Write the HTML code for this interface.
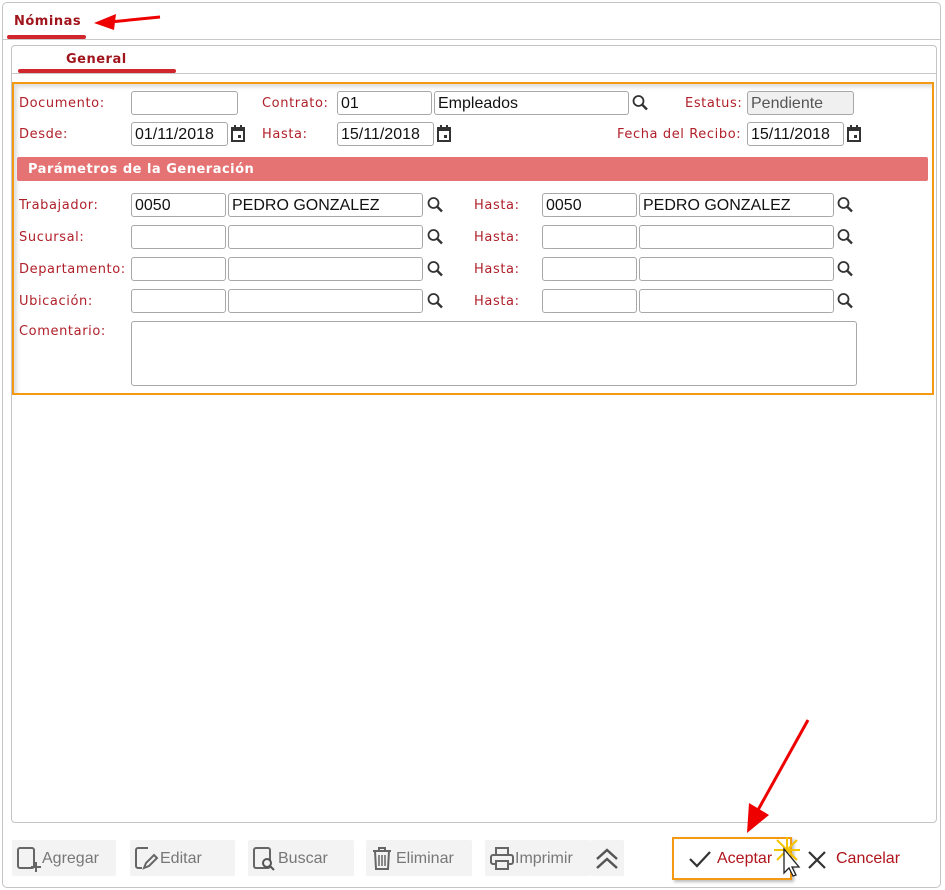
<!DOCTYPE html>
<html><head><meta charset="utf-8"><style>
*{box-sizing:border-box;margin:0;padding:0}
body{width:945px;height:890px;background:#fff;position:relative;overflow:hidden;font-family:"DejaVu Sans",Verdana,sans-serif}
.a{position:absolute}
.lbl{position:absolute;font-size:13px;color:#b0202a;letter-spacing:0.6px;line-height:26px;height:24px;white-space:nowrap}
.in{position:absolute;height:24px;border:1px solid #a8a8a8;border-radius:3px;background:#fff;font-family:"Liberation Sans",Arial,sans-serif;font-size:16px;line-height:24px;padding-left:3px;color:#111;white-space:nowrap;overflow:hidden}
.btn{position:absolute;top:840px;height:36px;background:#f3f3f3;border-radius:2px;font-family:"Liberation Sans",Arial,sans-serif;font-size:16px;color:#777;line-height:38px}
.btn svg{position:absolute;left:4px;top:6px}
.btn span{position:absolute;left:30px}
</style></head><body>
<div class="a" style="left:2px;top:2px;width:939px;height:886px;border:1px solid #c4c4c4;border-radius:5px"></div>
<div class="a" style="left:3px;top:39px;width:937px;height:1px;background:#c8c8c8"></div>
<div class="a" style="left:14px;top:14px;font-size:13px;font-weight:bold;color:#a0141c;letter-spacing:0.5px">Nóminas</div>
<div class="a" style="left:7px;top:35px;width:79px;height:4px;background:#d1262e;border-radius:2px"></div>
<svg class="a" style="left:90px;top:10px" width="75" height="25"><path d="M70 7 L20 12" stroke="#e00" stroke-width="3" fill="none"/><polygon points="4,13 26,4 24,20" fill="#e00"/></svg>

<div class="a" style="left:11px;top:45px;width:926px;height:778px;border:1px solid #c4c4c4;border-radius:4px"></div>
<div class="a" style="left:12px;top:73px;width:924px;height:1px;background:#c8c8c8"></div>
<div class="a" style="left:66px;top:52px;font-size:13px;font-weight:bold;color:#a0141c;letter-spacing:0.5px">General</div>
<div class="a" style="left:18px;top:69px;width:158px;height:4px;background:#d1262e;border-radius:2px"></div>

<div class="a" style="left:12px;top:82px;width:922px;height:313px;border:2px solid #f39a12;box-shadow:inset 3px 3px 4px #ddd"></div>

<div class="lbl" style="left:19px;top:91px">Documento:</div>
<div class="in" style="left:131px;top:91px;width:107px"></div>
<div class="lbl" style="left:262px;top:91px">Contrato:</div>
<div class="in" style="left:337px;top:91px;width:95px">01</div>
<div class="in" style="left:434px;top:91px;width:195px">Empleados</div>
<div class="lbl" style="left:685px;top:91px">Estatus:</div>
<div class="in" style="left:747px;top:91px;width:107px;background:#f0f0f0;color:#555">Pendiente</div>

<div class="lbl" style="left:19px;top:122px">Desde:</div>
<div class="in" style="left:131px;top:122px;width:97px">01/11/2018</div>
<div class="lbl" style="left:262px;top:122px">Hasta:</div>
<div class="in" style="left:337px;top:122px;width:97px">15/11/2018</div>
<div class="lbl" style="left:617px;top:122px">Fecha del Recibo:</div>
<div class="in" style="left:747px;top:122px;width:97px">15/11/2018</div>
<svg class="a" style="left:0;top:0" width="945" height="150">
<g id="c"><rect x="232" y="128" width="12" height="13" fill="none" stroke="#333" stroke-width="2"/><rect x="232" y="128" width="12" height="3" fill="#333"/><rect x="234" y="125" width="2" height="3" fill="#333"/><rect x="240" y="125" width="2" height="3" fill="#333"/><rect x="238" y="135" width="3" height="3" fill="#333"/></g>
<use href="#c" x="206"/><use href="#c" x="616"/>
</svg>

<div class="a" style="left:17px;top:157px;width:911px;height:24px;background:#e57373;border-radius:2px;color:#fff;font-size:13px;font-weight:bold;line-height:26px;padding-left:11px;letter-spacing:0.5px">Parámetros de la Generación</div>

<div class="lbl" style="left:19px;top:193px">Trabajador:</div>
<div class="in" style="left:131px;top:193px;width:95px">0050</div>
<div class="in" style="left:228px;top:193px;width:195px">PEDRO GONZALEZ</div>
<div class="lbl" style="left:474px;top:193px">Hasta:</div>
<div class="in" style="left:542px;top:193px;width:95px">0050</div>
<div class="in" style="left:639px;top:193px;width:195px">PEDRO GONZALEZ</div>

<div class="lbl" style="left:19px;top:225px">Sucursal:</div>
<div class="in" style="left:131px;top:225px;width:95px"></div>
<div class="in" style="left:228px;top:225px;width:195px"></div>
<div class="lbl" style="left:474px;top:225px">Hasta:</div>
<div class="in" style="left:542px;top:225px;width:95px"></div>
<div class="in" style="left:639px;top:225px;width:195px"></div>

<div class="lbl" style="left:19px;top:257px">Departamento:</div>
<div class="in" style="left:131px;top:257px;width:95px"></div>
<div class="in" style="left:228px;top:257px;width:195px"></div>
<div class="lbl" style="left:474px;top:257px">Hasta:</div>
<div class="in" style="left:542px;top:257px;width:95px"></div>
<div class="in" style="left:639px;top:257px;width:195px"></div>

<div class="lbl" style="left:19px;top:289px">Ubicación:</div>
<div class="in" style="left:131px;top:289px;width:95px"></div>
<div class="in" style="left:228px;top:289px;width:195px"></div>
<div class="lbl" style="left:474px;top:289px">Hasta:</div>
<div class="in" style="left:542px;top:289px;width:95px"></div>
<div class="in" style="left:639px;top:289px;width:195px"></div>

<svg class="a" style="left:0;top:0" width="945" height="320">
<g stroke="#333" fill="none">
<g id="s"><circle cx="433.5" cy="203" r="5" stroke-width="1.8"/><path d="M437 206.5L442 211.5" stroke-width="2.4"/></g>
<use href="#s" y="32"/><use href="#s" y="64"/><use href="#s" y="96"/>
<use href="#s" x="410"/><use href="#s" x="410" y="32"/><use href="#s" x="410" y="64"/><use href="#s" x="410" y="96"/>
<use href="#s" x="205" y="-102"/>
</g></svg>

<div class="lbl" style="left:19px;top:319px">Comentario:</div>
<div class="in" style="left:131px;top:321px;width:726px;height:65px"></div>

<div class="btn" style="left:12px;width:104px"><svg width="26" height="26"><rect x="2" y="2" width="16" height="20" rx="2" fill="none" stroke="#666" stroke-width="2"/><path d="M20 16v10M15 21h10" stroke="#666" stroke-width="2"/></svg><span>Agregar</span></div>
<div class="btn" style="left:130px;width:105px"><svg width="26" height="26"><path d="M14 2H4a2 2 0 0 0-2 2v16a2 2 0 0 0 2 2h4" fill="none" stroke="#666" stroke-width="2"/><path d="M10 22l2-5 8-8 3 3-8 8z" fill="none" stroke="#666" stroke-width="2"/></svg><span>Editar</span></div>
<div class="btn" style="left:248px;width:106px"><svg width="26" height="26"><rect x="2" y="2" width="16" height="20" rx="2" fill="none" stroke="#666" stroke-width="2"/><circle cx="15" cy="17" r="4" fill="#f3f3f3" stroke="#555" stroke-width="2"/><path d="M18 20l4 4" stroke="#555" stroke-width="2"/></svg><span>Buscar</span></div>
<div class="btn" style="left:366px;width:106px"><svg width="26" height="26"><path d="M3 5h18M9 5V2h6v3M5 5l1 18h12l1-18" fill="none" stroke="#666" stroke-width="2"/><path d="M9 9v11M12 9v11M15 9v11" stroke="#666" stroke-width="1.5"/></svg><span>Eliminar</span></div>
<div class="btn" style="left:485px;width:105px"><svg width="26" height="26"><rect x="7" y="2" width="12" height="7" fill="none" stroke="#666" stroke-width="2"/><rect x="2" y="9" width="22" height="9" rx="2" fill="none" stroke="#666" stroke-width="2"/><rect x="7" y="15" width="12" height="8" fill="#f3f3f3" stroke="#666" stroke-width="2"/></svg><span>Imprimir</span></div>
<div class="btn" style="left:590px;width:34px"><svg width="26" height="26" style="left:4px"><path d="M3 13l10-9 10 9M3 22l10-9 10 9" fill="none" stroke="#555" stroke-width="2.5"/></svg></div>

<div class="a" style="left:672px;top:837px;width:120px;height:43px;border:2px solid #f39a12;box-shadow:2px 2px 3px #bbb"></div>
<svg class="a" style="left:688px;top:849px" width="24" height="20"><path d="M2 10l7 7L22 3" fill="none" stroke="#333" stroke-width="2.2"/></svg>
<div class="a" style="left:717px;top:850px;font-family:'Liberation Sans',Arial,sans-serif;font-size:16px;color:#b0141c">Aceptar</div>
<svg class="a" style="left:806px;top:849px" width="22" height="22"><path d="M3 3l16 16M19 3L3 19" stroke="#333" stroke-width="2.2"/></svg>
<div class="a" style="left:836px;top:850px;font-family:'Liberation Sans',Arial,sans-serif;font-size:16px;color:#b0141c">Cancelar</div>
<svg class="a" style="left:770px;top:835px" width="40" height="45">
<g stroke="#f5c400" stroke-width="2"><path d="M17 2v26M4 15h26M7 5l20 20M27 5L7 25"/></g>
<path d="M14 14v24l5-5 4 8 3-1-4-8h7z" fill="#fff" stroke="#222" stroke-width="1.3"/>
</svg>
<svg class="a" style="left:735px;top:715px" width="80" height="120"><path d="M73 5L23 95" stroke="#e00" stroke-width="3"/><polygon points="12,118 14,88 34,100" fill="#e00"/></svg>
</body></html>
